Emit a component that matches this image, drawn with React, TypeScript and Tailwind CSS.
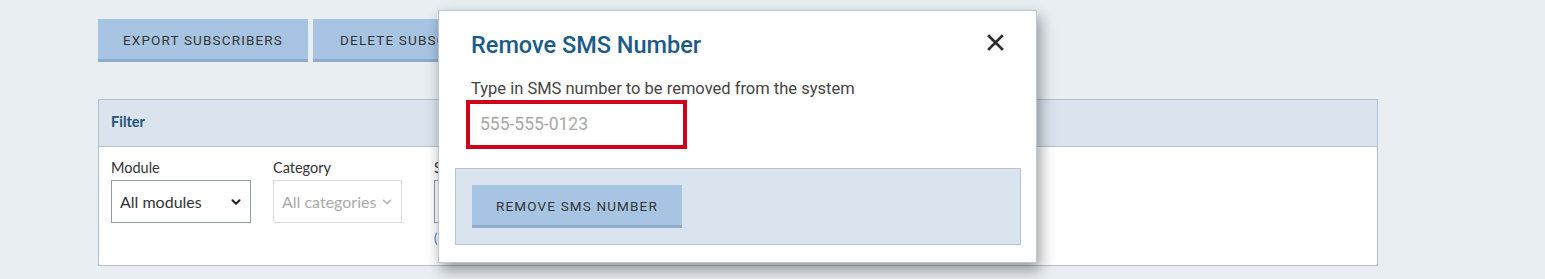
import { ChevronDown } from "lucide-react";

const pageFont = { fontFamily: "Lato, 'Open Sans', sans-serif" };

const ActionButton = ({ label, width }: { label: string; width: string }) => (
  <button
    className={`h-[43px] ${width} shrink-0 border-b-[3px] border-[#8fabc9] bg-[#a7c5e3] pt-[3px] text-[13.5px] tracking-[1.15px] text-[#333] uppercase`}
    style={{ fontFamily: "Roboto, sans-serif" }}
  >
    {label}
  </button>
);

const FakeSelect = ({
  value,
  disabled,
  width,
}: {
  value: string;
  disabled?: boolean;
  width: string;
}) => (
  <div
    className={`flex h-[43px] ${width} items-center justify-between overflow-hidden border pl-[8px] pr-[7px] text-[16px] ${
      disabled
        ? "border-[#d9dde3] text-[#aaaaaa]"
        : "border-[#8f9cab] text-[#333]"
    }`}
  >
    <span className="whitespace-nowrap">{value}</span>
    <ChevronDown
      size={14}
      strokeWidth={disabled ? 2.6 : 3.5}
      className={`shrink-0 ${disabled ? "text-[#b0b0b0]" : "text-[#222]"}`}
    />
  </div>
);

const RemoveSmsModal = () => (
  <div
    className="absolute left-[438px] top-[10px] flex h-[253px] w-[599px] flex-col border border-[#b9c6d4] bg-white shadow-[3px_7px_14px_rgba(0,0,0,0.4)]"
    style={{ fontFamily: "Roboto, sans-serif" }}
  >
    <div className="flex items-start justify-between pl-[32px] pr-[32px] pt-[19px]">
      <h2 className="text-[23.5px] leading-[30px] font-medium text-[#1b5b8b]">
        Remove SMS Number
      </h2>
      <svg
        width="17"
        height="17"
        viewBox="0 0 16 16"
        className="mt-[4px] text-[#2b2b2b]"
      >
        <path
          d="M2 2 L14 14 M14 2 L2 14"
          stroke="currentColor"
          strokeWidth="2.6"
          strokeLinecap="square"
          fill="none"
        />
      </svg>
    </div>
    <p className="mt-[19px] pl-[32px] text-[16.5px] leading-[20px] text-[#444]">
      Type in SMS number to be removed from the system
    </p>
    <div className="ml-[27px] mt-[1px] flex h-[49px] w-[221px] items-center border-[4px] border-[#d0021b] pl-[10px] text-[17.5px] text-[#a8a8a8]">
      555-555-0123
    </div>
    <div className="ml-[16px] mr-[15px] mt-[19px] flex h-[77px] items-center border border-[#b3c4d6] bg-[#dae4ef] pl-[16px]">
      <ActionButton label="Remove SMS Number" width="w-[210px]" />
    </div>
  </div>
);

export default function App() {
  return (
    <div
      className="relative h-[279px] w-full overflow-hidden bg-[#e9eef3]"
      style={pageFont}
    >
      <div className="pl-[98px] pt-[19px]">
        <div className="flex gap-[5px]">
          <ActionButton label="Export Subscribers" width="w-[210px]" />
          <ActionButton label="Delete Subscribers" width="w-[212px]" />
        </div>

        <div className="mt-[37px] w-[1280px] border border-[#b3c1d0] bg-white">
          <div className="flex h-[47px] items-center border-b border-[#b3c1d0] bg-[#dae4ef] px-[12px] pb-[2px] text-[14.5px] font-bold text-[#24527a]">
            Filter
          </div>
          <div className="flex h-[118px] gap-[22px] px-[12px] pt-[12px]">
            <div className="flex flex-col">
              <label className="text-[14.5px] leading-[18px] text-[#333]">
                Module
              </label>
              <div className="mt-[3px]">
                <FakeSelect value="All modules" width="w-[140px]" />
              </div>
            </div>
            <div className="flex flex-col">
              <label className="text-[14.5px] leading-[18px] text-[#333]">
                Category
              </label>
              <div className="mt-[3px]">
                <FakeSelect value="All categories" disabled width="w-[129px]" />
              </div>
            </div>
            <div className="ml-[10px] flex flex-col">
              <label className="text-[14.5px] leading-[18px] text-[#333]">
                S
              </label>
              <div className="mt-[3px] h-[43px] w-[40px] border border-[#8f9cab]" />
              <span className="mt-[6px] text-[13px] text-[#2f7ad1]">(</span>
            </div>
          </div>
        </div>
      </div>

      <RemoveSmsModal />
    </div>
  );
}
